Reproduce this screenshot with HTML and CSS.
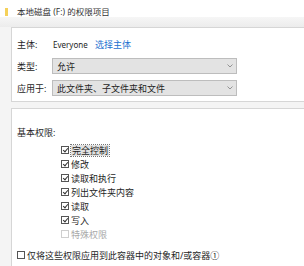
FILE: index.html
```html
<!DOCTYPE html>
<html lang="zh-CN">

<head>
    <meta charset="UTF-8">
    <title>本地磁盘 (F:) 的权限项目</title>
    <link rel="stylesheet" href="styles.css">
</head>

<body>
    <div class="titlebar">
        <span class="folder"></span>
        <span class="title">本地磁盘 (F:) 的权限项目</span>
    </div>
    <div class="strip"></div>

    <div class="panel top-panel">
        <div class="field-row">
            <span class="label">主体:</span>
            <span class="value">Everyone</span>
            <a class="link" href="#">选择主体</a>
        </div>
        <div class="field-row">
            <span class="label">类型:</span>
            <div class="select">
                <span>允许</span>
                <svg class="chevron" width="6" height="4" viewBox="0 0 6 4"><path d="M0.5 0.5 L3 3 L5.5 0.5" fill="none" stroke="#8a8a8a" stroke-width="0.9"/></svg>
            </div>
        </div>
        <div class="field-row">
            <span class="label">应用于:</span>
            <div class="select">
                <span>此文件夹、子文件夹和文件</span>
                <svg class="chevron" width="6" height="4" viewBox="0 0 6 4"><path d="M0.5 0.5 L3 3 L5.5 0.5" fill="none" stroke="#8a8a8a" stroke-width="0.9"/></svg>
            </div>
        </div>
    </div>

    <div class="panel bottom-panel">
        <div class="heading">基本权限:</div>
        <ul class="perms">
            <li><span class="box checked"></span><span class="focus">完全控制</span></li>
            <li><span class="box checked"></span><span>修改</span></li>
            <li><span class="box checked"></span><span>读取和执行</span></li>
            <li><span class="box checked"></span><span>列出文件夹内容</span></li>
            <li><span class="box checked"></span><span>读取</span></li>
            <li><span class="box checked"></span><span>写入</span></li>
            <li class="disabled"><span class="box"></span><span>特殊权限</span></li>
        </ul>
        <div class="apply-row"><span class="box"></span><span>仅将这些权限应用到此容器中的对象和/或容器①</span></div>
    </div>
</body>

</html>
```

FILE: styles.css
```css
body {
    margin: 0;
    width: 304px;
    height: 266px;
    overflow: hidden;
    background-color: #f4f4f4;
    font-family: "Noto Sans", "Noto Sans CJK SC", sans-serif;
    font-size: 9px;
    color: #1e1e1e;
}

.titlebar {
    height: 17px;
    background: #fff;
    display: flex;
    align-items: center;
}

.folder {
    width: 3px;
    height: 8px;
    margin-left: 5px;
    margin-top: 6px;
    background: #f5d15a;
}

.title {
    margin-left: 9px;
    margin-top: 5px;
    font-size: 8.5px;
    color: #333;
}

.strip {
    height: 10px;
    background: linear-gradient(#f6f6f6, #ececec);
}

.panel {
    margin-left: 11px;
    background: #fff;
    border: 1px solid #d6d6d6;
    border-right: none;
    box-sizing: border-box;
    padding-left: 5px;
}

.top-panel {
    height: 75px;
    padding-top: 8px;
}

.field-row {
    display: flex;
    align-items: center;
    height: 16px;
    margin-bottom: 6px;
}

.label {
    width: 35px;
}

.value {
    margin-left: 1px;
    width: 42px;
    font-size: 8px;
}

.link {
    color: #1a6fd0;
    text-decoration: none;
}

.select {
    width: 185px;
    height: 16px;
    box-sizing: border-box;
    background: #e3e3e3;
    border: 1px solid #bdbdbd;
    display: flex;
    align-items: center;
    justify-content: space-between;
    padding: 0 3px 0 4px;
}

.chevron {
    display: block;
}

.bottom-panel {
    margin-top: 6px;
    height: 170px;
    padding-top: 17px;
}

.heading {
    height: 14px;
    line-height: 14px;
}

.perms {
    list-style: none;
    margin: 3px 0 0 44px;
    padding: 0;
}

.perms li {
    display: flex;
    align-items: center;
    height: 14px;
}

.box {
    width: 8px;
    height: 8px;
    box-sizing: border-box;
    border: 1px solid #555;
    margin-right: 2px;
    background: #fff;
    position: relative;
}

.box.checked::after {
    content: "";
    position: absolute;
    left: 1.5px;
    top: 0px;
    width: 2px;
    height: 4px;
    border-right: 1px solid #333;
    border-bottom: 1px solid #333;
    transform: rotate(40deg);
}

.focus {
    background: #e1e1e1;
    outline: 1px dotted #777;
    padding: 0 1px;
    line-height: 11px;
}

.disabled {
    color: #a8a8a8;
}

.disabled .box {
    border-color: #cfcfcf;
}

.apply-row {
    display: flex;
    align-items: center;
    height: 14px;
    margin-top: 7px;
}
```
